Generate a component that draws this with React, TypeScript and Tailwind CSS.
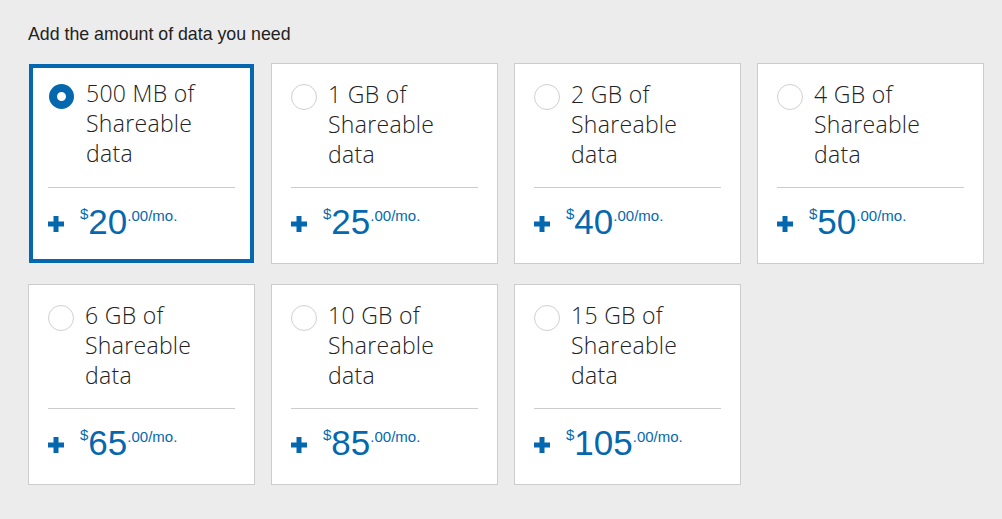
import React from "react";

type Plan = { size: string; price: string };

const plans: Plan[] = [
  { size: "500 MB", price: "20" },
  { size: "1 GB", price: "25" },
  { size: "2 GB", price: "40" },
  { size: "4 GB", price: "50" },
  { size: "6 GB", price: "65" },
  { size: "10 GB", price: "85" },
  { size: "15 GB", price: "105" },
];

function Plus() {
  return (
    <svg width="16" height="16" viewBox="0 0 16 16" className="mt-[12px] shrink-0">
      <rect x="5.5" y="0" width="5" height="16" fill="#0568ae" />
      <rect x="0" y="5.5" width="16" height="5" fill="#0568ae" />
    </svg>
  );
}

function Card({ plan, selected }: { plan: Plan; selected: boolean }) {
  return (
    <div className="w-[227px] h-[201px]">
      <div
        className={
          selected
            ? "m-[1px] h-[199px] border-4 border-[#0568ae] bg-white px-[15px] pt-[10px]"
            : "h-[201px] border border-[#cccccc] bg-white px-[19px] pt-[15px]"
        }
      >
        <div className="flex items-start">
          {selected ? (
            <div className="mt-[6px] ml-[1px] w-[25px] h-[25px] rounded-full border-[8.5px] border-[#0568ae] bg-white shrink-0" />
          ) : (
            <div className="mt-[5px] w-[26px] h-[26px] rounded-full border-[1.5px] border-[#d0d0d0] bg-white shrink-0" />
          )}
          <div
            className={
              selected
                ? "ml-[12px] text-[23px] leading-[30px] tracking-[0.3px] font-light text-[#222222]"
                : "ml-[11px] text-[23px] leading-[30px] tracking-[0.3px] font-light text-[#222222]"
            }
            style={{ fontFamily: '"Open Sans", "Noto Sans", sans-serif' }}
          >
            {plan.size} of
            <br />
            Shareable
            <br />
            data
          </div>
        </div>
        <div className={selected ? "mt-[19px] h-px bg-[#cccccc]" : "mt-[18px] h-px bg-[#cccccc]"} />
        <div
          className="mt-[16px] flex items-start text-[#0568ae]"
          style={{ fontFamily: '"Liberation Sans", Arial, sans-serif' }}
        >
          <Plus />
          <span className="ml-[16px] mt-[2px] text-[15px] leading-none">$</span>
          <span className="text-[35px] leading-none">{plan.price}</span>
          <span className="mt-[4px] text-[15px] leading-none">.00/mo.</span>
        </div>
      </div>
    </div>
  );
}

export default function App() {
  return (
    <div
      className="w-[1002px] h-[519px] bg-[#ececec] pl-[28px] pt-[22px]"
      style={{ fontFamily: '"Liberation Sans", Arial, sans-serif' }}
    >
      <div className="text-[17.75px] leading-[24px] text-[#222222] mb-[17px]">
        Add the amount of data you need
      </div>
      <div className="grid grid-cols-[227px_227px_227px_227px] gap-x-[16px] gap-y-[20px]">
        {plans.map((p, i) => (
          <Card key={p.size} plan={p} selected={i === 0} />
        ))}
      </div>
    </div>
  );
}
